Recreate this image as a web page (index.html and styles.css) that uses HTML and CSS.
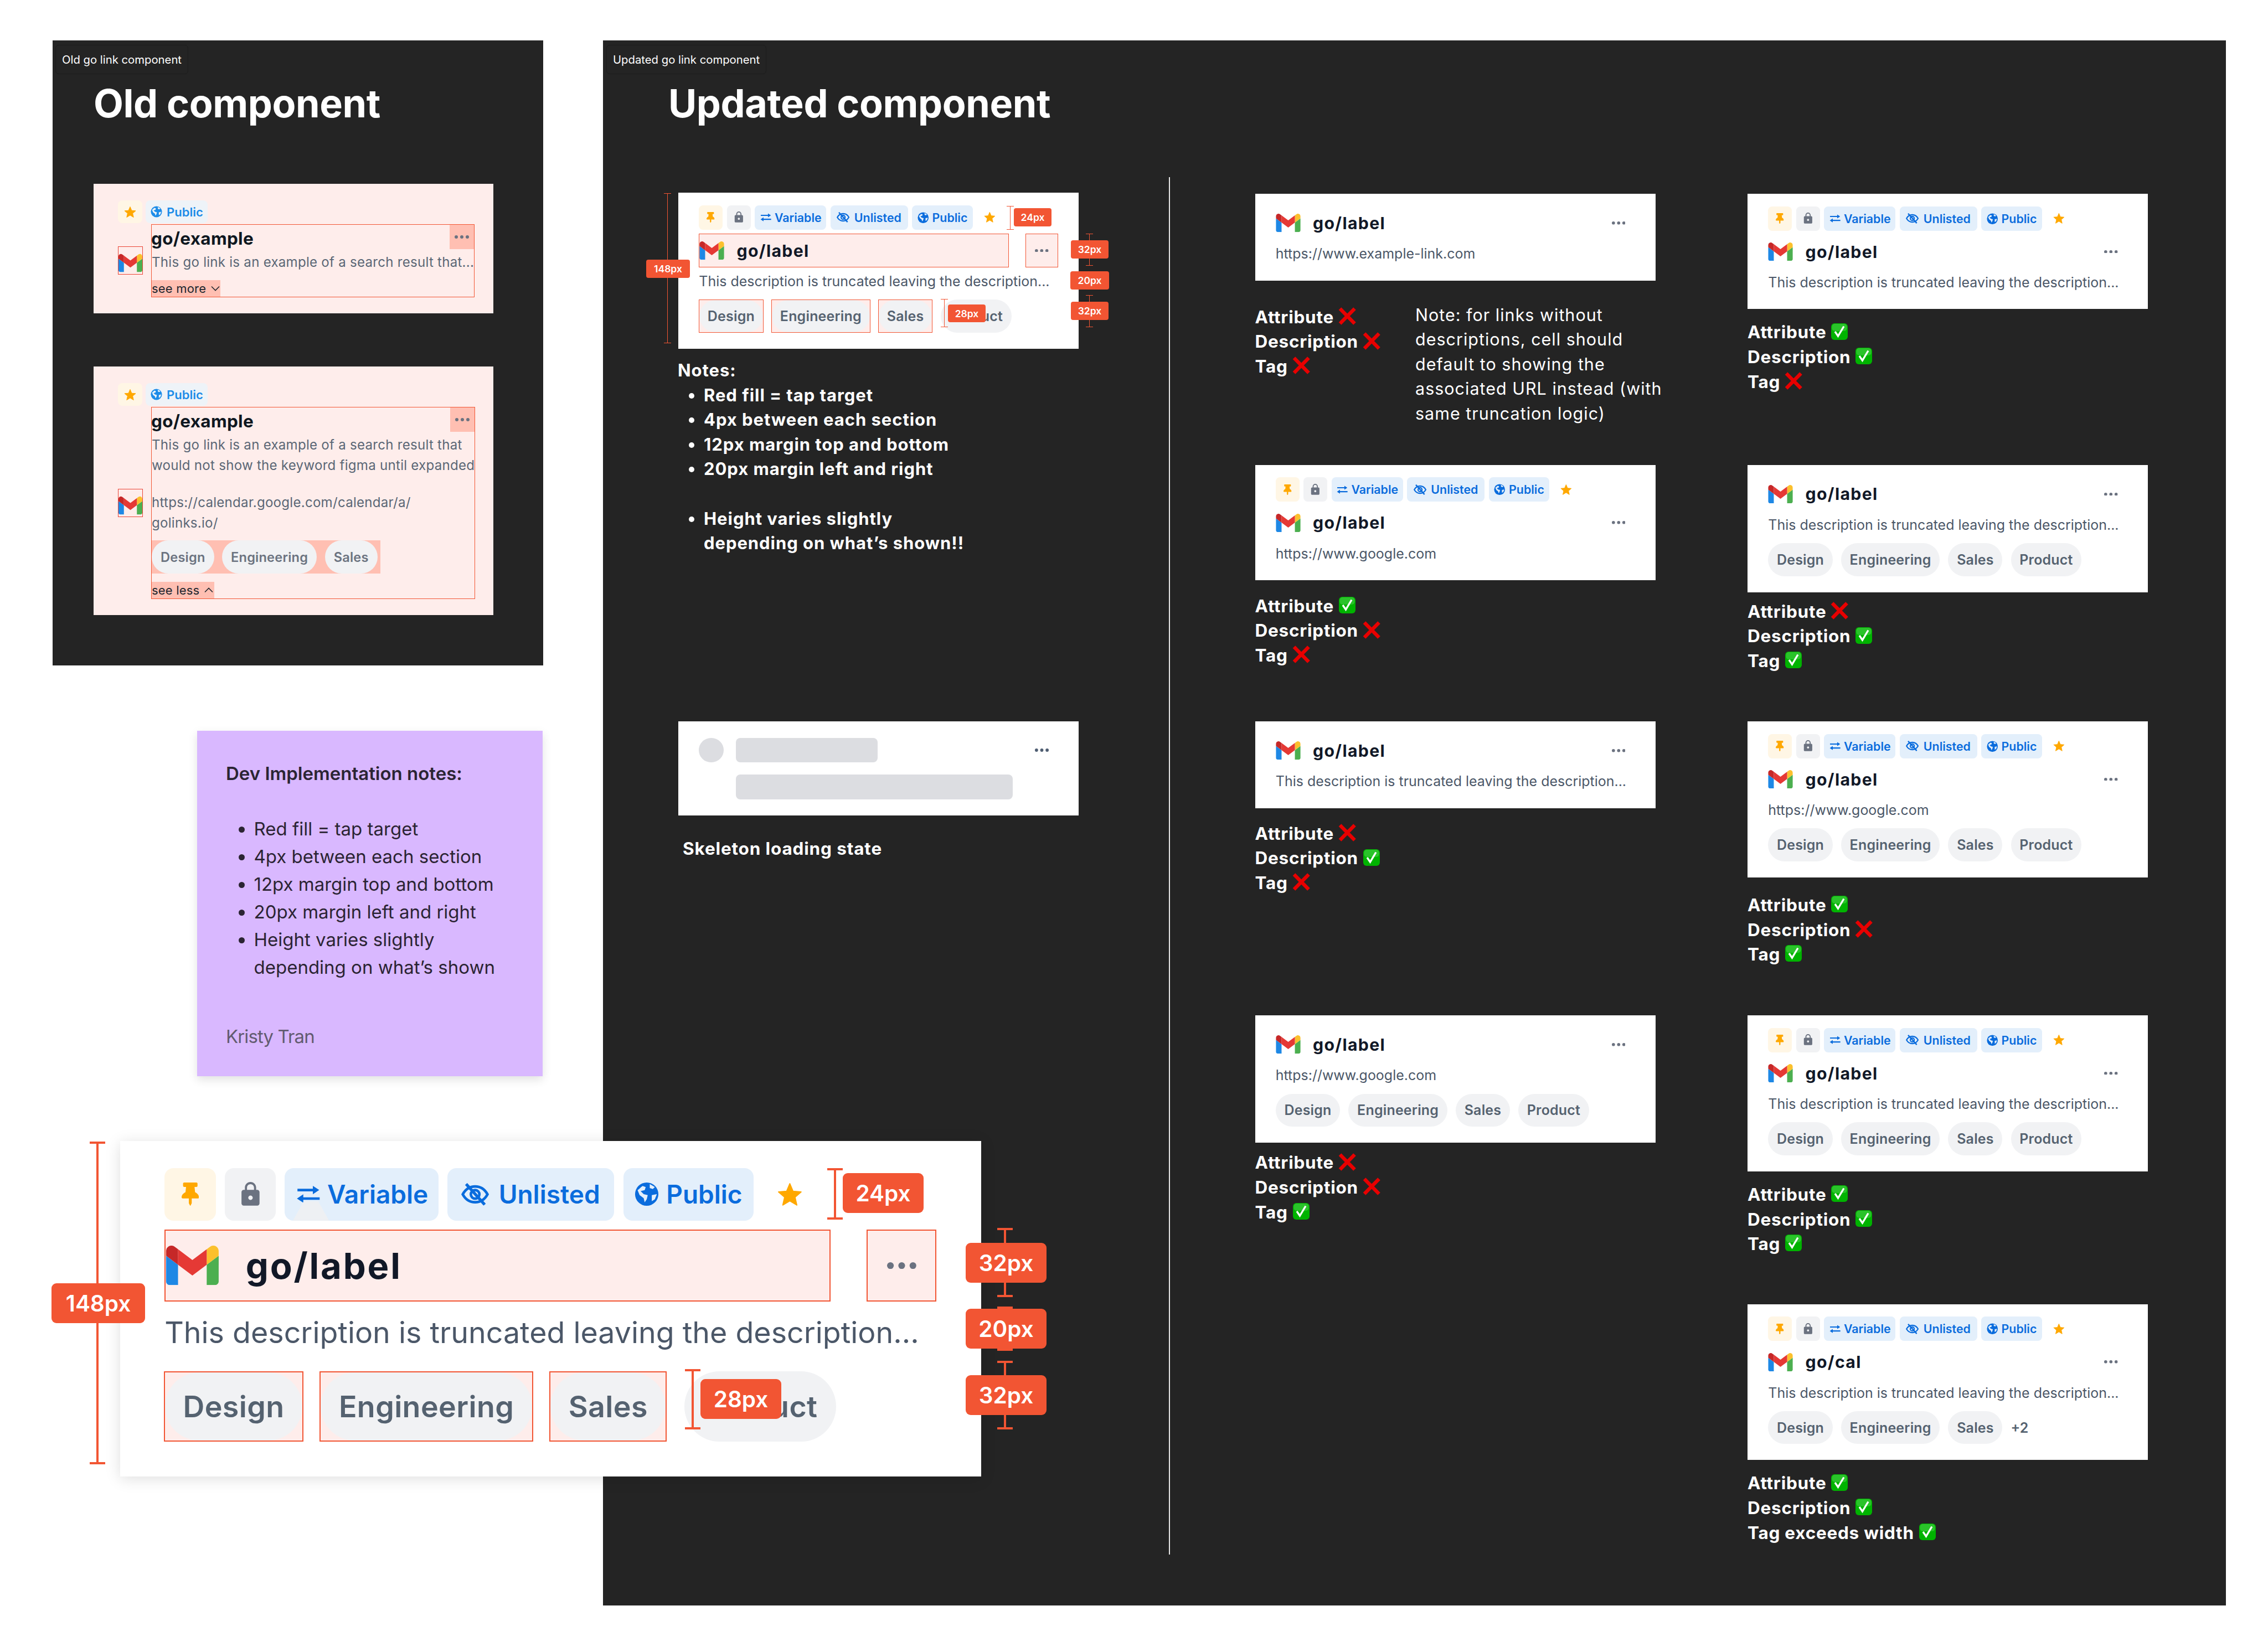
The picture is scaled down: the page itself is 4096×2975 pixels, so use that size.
FILE: index.html
```html
<!DOCTYPE html>
<html lang="en">
<head>
<meta charset="utf-8">
<title>Go link component</title>
<link rel="stylesheet" href="styles.css">
</head>
<body>
<svg class="defs" aria-hidden="true">
  <symbol id="pin" viewBox="0 0 384 512"><path d="M298 214L286 96h42c13 0 24-11 24-24V24c0-13-11-24-24-24H56C43 0 32 11 32 24v48c0 13 11 24 24 24h42L86 214C37 237 0 277 0 328c0 13 11 24 24 24h136v104c0 1 .3 2.500 .8 3.600l24 48c3 5.900 11.400 5.900 14.300 0l24-48c.6-1.100 .8-2.300 .8-3.600V352h136c13 0 24-11 24-24 0-51-38-91-86-114z"/></symbol>
  <symbol id="lock" viewBox="0 0 24 24"><path d="M18 8h-1V6c0-2.760-2.240-5-5-5S7 3.240 7 6v2H6c-1.100 0-2 .9-2 2v10c0 1.100 .9 2 2 2h12c1.100 0 2-.9 2-2V10c0-1.100-.9-2-2-2zm-6 9c-1.100 0-2-.9-2-2s.9-2 2-2 2 .9 2 2-.9 2-2 2zm3.100-9H8.900V6c0-1.710 1.390-3.100 3.100-3.100 1.710 0 3.100 1.390 3.100 3.100v2z"/></symbol>
  <symbol id="swap" viewBox="0 0 22 17"><path d="M1 4.500H18M22 12.500H4" fill="none" stroke="currentColor" stroke-width="2.400"/><path d="M15.500 .5L21.500 4.500L15.500 8.500zM6.500 8.500L.5 12.500L6.500 16.500z"/></symbol>
  <symbol id="eyeoff" viewBox="0 0 26 20"><g fill="none" stroke="currentColor" stroke-width="2.300"><path d="M2 10C5 4.500 9 3 13 3s8 1.500 11 7c-3 5.500-7 7-11 7s-8-1.500-11-7z"/><circle cx="13" cy="10" r="3.800"/><path d="M5 .8L21.500 19.200" stroke-width="2.600"/></g></symbol>
  <symbol id="globe" viewBox="0 0 24 24"><circle cx="12" cy="12" r="11.500"/><path class="land" d="M3 8c2-1 3-3 5-4l3 1-1 3-4 1 3 3 4 1-1 4-2 3-1-4-4-3zM15 2l5 3-2 2-3-1zM17 13l5-1-2 5-3 2z"/></symbol>
  <symbol id="star" viewBox="0 0 24 24"><path d="M12 17.800l6.200 3.700-1.600-7 5.400-4.700-7.200-.6L12 2.500 9.200 9.200 2 9.800l5.400 4.700-1.600 7z" stroke="currentColor" stroke-width="1" stroke-linejoin="round"/></symbol>
  <symbol id="dots" viewBox="0 0 13 3"><circle cx="1.500" cy="1.500" r="1.500"/><circle cx="6.500" cy="1.500" r="1.500"/><circle cx="11.500" cy="1.500" r="1.500"/></symbol>
  <symbol id="gmail" viewBox="52 42 88 66"><path fill="#1e88e5" d="M58 108h14V74L52 59v43c0 3.320 2.690 6 6 6"/><path fill="#4caf50" d="M120 108h14c3.320 0 6-2.690 6-6V59l-20 15"/><path fill="#fbc02d" d="M120 48v26l20-15v-8c0-7.420-8.470-11.650-14.400-7.200"/><path fill="#e53935" d="M72 74V48l24 18 24-18v26L96 92"/><path fill="#c62828" d="M52 51v8l20 15V48l-5.600-4.200c-5.940-4.450-14.400-.22-14.400 7.200"/></symbol>
  <symbol id="yes" viewBox="0 0 32 32"><rect x="1" y="1" width="30" height="30" rx="6" fill="#00b300"/><rect x="2.500" y="2" width="27" height="13" rx="5" fill="#4ccf4c" opacity=".55"/><path d="M8 16l5.500 8L24 6.500" fill="none" stroke="#fff" stroke-width="3.400"/></symbol>
  <symbol id="no" viewBox="0 0 32 32"><path d="M3 2.500L29.500 29.500M29.500 2.500L3 29.500" fill="none" stroke="#e80000" stroke-width="6.500"/></symbol>
  <symbol id="chev-down" viewBox="0 0 16 10"><path d="M1 1.500l7 7 7-7" fill="none" stroke="currentColor" stroke-width="1.600"/></symbol>
  <symbol id="chev-up" viewBox="0 0 16 10"><path d="M1 8.500l7-7 7 7" fill="none" stroke="currentColor" stroke-width="1.600"/></symbol>
</svg>

<main class="canvas">

  <section class="frame frame-old">
    <div class="frame-tag">Old go link component</div>
    <h1 class="frame-title">Old component</h1>
    <article class="old-card old-one">
      <div class="old-badges">
        <span class="old-badge old-star"><svg class="old-star-ic"><use href="#star"/></svg></span>
        <span class="old-badge old-public"><svg class="old-globe"><use href="#globe"/></svg>Public</span>
      </div>
      <div class="old-body">
        <svg class="old-logo"><use href="#gmail"/></svg>
        <div class="old-target">
          <span class="old-more"><svg class="dots"><use href="#dots"/></svg></span>
          <div class="old-title">go/example</div>
          <div class="old-desc">This go link is an example of a search result that...</div>
          <div class="old-toggle old-toggle-more">see more<svg class="chev"><use href="#chev-down"/></svg></div>
        </div>
      </div>
    </article>
    <article class="old-card old-two">
      <div class="old-badges">
        <span class="old-badge old-star"><svg class="old-star-ic"><use href="#star"/></svg></span>
        <span class="old-badge old-public"><svg class="old-globe"><use href="#globe"/></svg>Public</span>
      </div>
      <div class="old-body">
        <svg class="old-logo"><use href="#gmail"/></svg>
        <div class="old-target">
          <span class="old-more"><svg class="dots"><use href="#dots"/></svg></span>
          <div class="old-title">go/example</div>
          <div class="old-desc old-nowrap">This go link is an example of a search result that<br>would not show the keyword figma until expanded</div>
          <div class="old-desc old-url">https://calendar.google.com/calendar/a/<br>golinks.io/</div>
          <div class="old-tags"><span class="old-tag">Design</span><span class="old-tag">Engineering</span><span class="old-tag">Sales</span></div>
          <div class="old-toggle old-toggle-less">see less<svg class="chev"><use href="#chev-up"/></svg></div>
        </div>
      </div>
    </article>
  </section>

  <aside class="sticky">
    <p class="sticky-title">Dev Implementation notes:</p>
    <ul class="sticky-list">
      <li>Red fill = tap target</li>
      <li>4px between each section</li>
      <li>12px margin top and bottom</li>
      <li>20px margin left and right</li>
      <li>Height varies slightly<br>depending on what’s shown</li>
    </ul>
    <p class="sticky-author">Kristy Tran</p>
  </aside>

  <section class="frame frame-new">
    <div class="frame-tag">Updated go link component</div>
    <h1 class="frame-title">Updated component</h1>
  </section>

  <div class="node spec-small">
    <div class="card spec">
      <div class="attrs">
        <span class="badge b-pin"><svg class="i-pin"><use href="#pin"/></svg></span>
        <span class="badge b-lock"><svg class="i-lock"><use href="#lock"/></svg></span>
        <span class="badge b-blue b-varw"><svg class="i-swap"><use href="#swap"/></svg>Variable</span>
        <span class="badge b-blue b-unl"><svg class="i-eye"><use href="#eyeoff"/></svg>Unlisted</span>
        <span class="badge b-blue"><svg class="i-globe"><use href="#globe"/></svg>Public</span>
        <svg class="i-star"><use href="#star"/></svg>
      </div>
      <div class="head">
        <div class="link"><svg class="gmail"><use href="#gmail"/></svg><span class="label">go/label</span></div>
        <span class="more"><svg class="dots"><use href="#dots"/></svg></span>
      </div>
      <div class="desc">This description is truncated leaving the description...</div>
      <div class="tags">
        <span class="tag">Design</span><span class="tag">Engineering</span><span class="tag">Sales</span><span class="tag tag-plain">Product</span>
      </div>
    </div>
  </div>

  <i class="bracket br-s br-148"></i><b class="px px-s px-148">148px</b>
  <i class="bracket br-s br-24"></i><b class="px px-s px-24">24px</b>
  <i class="bracket br-s br-32a"></i><b class="px px-s px-32a">32px</b>
  <b class="px px-s px-20">20px</b>
  <i class="bracket br-s br-32b"></i><b class="px px-s px-32b">32px</b>
  <i class="bracket br-s br-28"></i><b class="px px-s px-28">28px</b>

  <div class="spec-notes">
    <p class="spec-notes-head">Notes:</p>
    <ul class="spec-notes-list">
      <li>Red fill = tap target</li>
      <li>4px between each section</li>
      <li>12px margin top and bottom</li>
      <li>20px margin left and right</li>
      <li class="gap">Height varies slightly<br>depending on what’s shown!!</li>
    </ul>
  </div>

  <div class="skeleton">
    <span class="sk-circle"></span>
    <span class="sk-bar sk-short"></span>
    <svg class="dots sk-dots"><use href="#dots"/></svg>
    <span class="sk-bar sk-long"></span>
  </div>
  <p class="sk-caption">Skeleton loading state</p>

  <div class="divider"></div>

  <!-- column 2 -->
  <div class="node c2-1">
    <div class="card">
      <div class="head"><div class="link"><svg class="gmail"><use href="#gmail"/></svg><span class="label">go/label</span></div><span class="more"><svg class="dots"><use href="#dots"/></svg></span></div>
      <div class="desc url">https://www.example-link.com</div>
    </div>
    <div class="status s-44">
      <div class="st">Attribute<svg class="mark"><use href="#no"/></svg></div>
      <div class="st">Description<svg class="mark"><use href="#no"/></svg></div>
      <div class="st">Tag<svg class="mark"><use href="#no"/></svg></div>
    </div>
  </div>
  <p class="note">Note: for links without<br>descriptions, cell should<br>default to showing the<br>associated URL instead (with<br>same truncation logic)</p>

  <div class="node c2-2">
    <div class="card">
      <div class="attrs">
        <span class="badge b-pin"><svg class="i-pin"><use href="#pin"/></svg></span>
        <span class="badge b-lock"><svg class="i-lock"><use href="#lock"/></svg></span>
        <span class="badge b-blue b-varw"><svg class="i-swap"><use href="#swap"/></svg>Variable</span>
        <span class="badge b-blue b-unl"><svg class="i-eye"><use href="#eyeoff"/></svg>Unlisted</span>
        <span class="badge b-blue"><svg class="i-globe"><use href="#globe"/></svg>Public</span>
        <svg class="i-star"><use href="#star"/></svg>
      </div>
      <div class="head"><div class="link"><svg class="gmail"><use href="#gmail"/></svg><span class="label">go/label</span></div><span class="more"><svg class="dots"><use href="#dots"/></svg></span></div>
      <div class="desc url">https://www.google.com</div>
    </div>
    <div class="status s-25">
      <div class="st">Attribute<svg class="mark"><use href="#yes"/></svg></div>
      <div class="st">Description<svg class="mark"><use href="#no"/></svg></div>
      <div class="st">Tag<svg class="mark"><use href="#no"/></svg></div>
    </div>
  </div>

  <div class="node c2-3">
    <div class="card">
      <div class="head"><div class="link"><svg class="gmail"><use href="#gmail"/></svg><span class="label">go/label</span></div><span class="more"><svg class="dots"><use href="#dots"/></svg></span></div>
      <div class="desc">This description is truncated leaving the description...</div>
    </div>
    <div class="status s-24">
      <div class="st">Attribute<svg class="mark"><use href="#no"/></svg></div>
      <div class="st">Description<svg class="mark"><use href="#yes"/></svg></div>
      <div class="st">Tag<svg class="mark"><use href="#no"/></svg></div>
    </div>
  </div>

  <div class="node c2-4">
    <div class="card">
      <div class="head"><div class="link"><svg class="gmail"><use href="#gmail"/></svg><span class="label">go/label</span></div><span class="more"><svg class="dots"><use href="#dots"/></svg></span></div>
      <div class="desc url">https://www.google.com</div>
      <div class="tags"><span class="tag">Design</span><span class="tag">Engineering</span><span class="tag">Sales</span><span class="tag">Product</span></div>
    </div>
    <div class="status s-14">
      <div class="st">Attribute<svg class="mark"><use href="#no"/></svg></div>
      <div class="st">Description<svg class="mark"><use href="#no"/></svg></div>
      <div class="st">Tag<svg class="mark"><use href="#yes"/></svg></div>
    </div>
  </div>

  <!-- column 3 -->
  <div class="node c3-1">
    <div class="card">
      <div class="attrs">
        <span class="badge b-pin"><svg class="i-pin"><use href="#pin"/></svg></span>
        <span class="badge b-lock"><svg class="i-lock"><use href="#lock"/></svg></span>
        <span class="badge b-blue b-varw"><svg class="i-swap"><use href="#swap"/></svg>Variable</span>
        <span class="badge b-blue b-unl"><svg class="i-eye"><use href="#eyeoff"/></svg>Unlisted</span>
        <span class="badge b-blue"><svg class="i-globe"><use href="#globe"/></svg>Public</span>
        <svg class="i-star"><use href="#star"/></svg>
      </div>
      <div class="head"><div class="link"><svg class="gmail"><use href="#gmail"/></svg><span class="label">go/label</span></div><span class="more"><svg class="dots"><use href="#dots"/></svg></span></div>
      <div class="desc">This description is truncated leaving the description...</div>
    </div>
    <div class="status s-20">
      <div class="st">Attribute<svg class="mark"><use href="#yes"/></svg></div>
      <div class="st">Description<svg class="mark"><use href="#yes"/></svg></div>
      <div class="st">Tag<svg class="mark"><use href="#no"/></svg></div>
    </div>
  </div>

  <div class="node c3-2">
    <div class="card">
      <div class="head"><div class="link"><svg class="gmail"><use href="#gmail"/></svg><span class="label">go/label</span></div><span class="more"><svg class="dots"><use href="#dots"/></svg></span></div>
      <div class="desc">This description is truncated leaving the description...</div>
      <div class="tags"><span class="tag">Design</span><span class="tag">Engineering</span><span class="tag">Sales</span><span class="tag">Product</span></div>
    </div>
    <div class="status s-13">
      <div class="st">Attribute<svg class="mark"><use href="#no"/></svg></div>
      <div class="st">Description<svg class="mark"><use href="#yes"/></svg></div>
      <div class="st">Tag<svg class="mark"><use href="#yes"/></svg></div>
    </div>
  </div>

  <div class="node c3-3">
    <div class="card">
      <div class="attrs">
        <span class="badge b-pin"><svg class="i-pin"><use href="#pin"/></svg></span>
        <span class="badge b-lock"><svg class="i-lock"><use href="#lock"/></svg></span>
        <span class="badge b-blue b-varw"><svg class="i-swap"><use href="#swap"/></svg>Variable</span>
        <span class="badge b-blue b-unl"><svg class="i-eye"><use href="#eyeoff"/></svg>Unlisted</span>
        <span class="badge b-blue"><svg class="i-globe"><use href="#globe"/></svg>Public</span>
        <svg class="i-star"><use href="#star"/></svg>
      </div>
      <div class="head"><div class="link"><svg class="gmail"><use href="#gmail"/></svg><span class="label">go/label</span></div><span class="more"><svg class="dots"><use href="#dots"/></svg></span></div>
      <div class="desc url">https://www.google.com</div>
      <div class="tags"><span class="tag">Design</span><span class="tag">Engineering</span><span class="tag">Sales</span><span class="tag">Product</span></div>
    </div>
    <div class="status s-28">
      <div class="st">Attribute<svg class="mark"><use href="#yes"/></svg></div>
      <div class="st">Description<svg class="mark"><use href="#no"/></svg></div>
      <div class="st">Tag<svg class="mark"><use href="#yes"/></svg></div>
    </div>
  </div>

  <div class="node c3-4">
    <div class="card">
      <div class="attrs">
        <span class="badge b-pin"><svg class="i-pin"><use href="#pin"/></svg></span>
        <span class="badge b-lock"><svg class="i-lock"><use href="#lock"/></svg></span>
        <span class="badge b-blue b-varw"><svg class="i-swap"><use href="#swap"/></svg>Variable</span>
        <span class="badge b-blue b-unl"><svg class="i-eye"><use href="#eyeoff"/></svg>Unlisted</span>
        <span class="badge b-blue"><svg class="i-globe"><use href="#globe"/></svg>Public</span>
        <svg class="i-star"><use href="#star"/></svg>
      </div>
      <div class="head"><div class="link"><svg class="gmail"><use href="#gmail"/></svg><span class="label">go/label</span></div><span class="more"><svg class="dots"><use href="#dots"/></svg></span></div>
      <div class="desc">This description is truncated leaving the description...</div>
      <div class="tags"><span class="tag">Design</span><span class="tag">Engineering</span><span class="tag">Sales</span><span class="tag">Product</span></div>
    </div>
    <div class="status s-20">
      <div class="st">Attribute<svg class="mark"><use href="#yes"/></svg></div>
      <div class="st">Description<svg class="mark"><use href="#yes"/></svg></div>
      <div class="st">Tag<svg class="mark"><use href="#yes"/></svg></div>
    </div>
  </div>

  <div class="node c3-5">
    <div class="card">
      <div class="attrs">
        <span class="badge b-pin"><svg class="i-pin"><use href="#pin"/></svg></span>
        <span class="badge b-lock"><svg class="i-lock"><use href="#lock"/></svg></span>
        <span class="badge b-blue b-varw"><svg class="i-swap"><use href="#swap"/></svg>Variable</span>
        <span class="badge b-blue b-unl"><svg class="i-eye"><use href="#eyeoff"/></svg>Unlisted</span>
        <span class="badge b-blue"><svg class="i-globe"><use href="#globe"/></svg>Public</span>
        <svg class="i-star"><use href="#star"/></svg>
      </div>
      <div class="head"><div class="link"><svg class="gmail"><use href="#gmail"/></svg><span class="label">go/cal</span></div><span class="more"><svg class="dots"><use href="#dots"/></svg></span></div>
      <div class="desc">This description is truncated leaving the description...</div>
      <div class="tags"><span class="tag">Design</span><span class="tag">Engineering</span><span class="tag">Sales</span><span class="overflow">+2</span></div>
    </div>
    <div class="status s-20">
      <div class="st">Attribute<svg class="mark"><use href="#yes"/></svg></div>
      <div class="st">Description<svg class="mark"><use href="#yes"/></svg></div>
      <div class="st">Tag exceeds width<svg class="mark"><use href="#yes"/></svg></div>
    </div>
  </div>

  <!-- enlarged spec -->
  <div class="node spec-big">
    <div class="card spec big">
      <div class="attrs">
        <span class="badge b-pin"><svg class="i-pin"><use href="#pin"/></svg></span>
        <span class="badge b-lock"><svg class="i-lock"><use href="#lock"/></svg></span>
        <span class="badge b-blue b-varw b-var"><svg class="i-swap"><use href="#swap"/></svg>Variable</span>
        <span class="badge b-blue b-unl"><svg class="i-eye"><use href="#eyeoff"/></svg>Unlisted</span>
        <span class="badge b-blue"><svg class="i-globe"><use href="#globe"/></svg>Public</span>
        <svg class="i-star"><use href="#star"/></svg>
      </div>
      <div class="head">
        <div class="link"><svg class="gmail"><use href="#gmail"/></svg><span class="label">go/label</span></div>
        <span class="more"><svg class="dots"><use href="#dots"/></svg></span>
      </div>
      <div class="desc">This description is truncated leaving the description...</div>
      <div class="tags">
        <span class="tag">Design</span><span class="tag">Engineering</span><span class="tag">Sales</span><span class="tag tag-plain">Product</span>
      </div>
    </div>
  </div>
  <i class="bracket br-l brl-148"></i><b class="px px-l pxl-148">148px</b>
  <i class="bracket br-l brl-24"></i><b class="px px-l pxl-24">24px</b>
  <i class="bracket br-l brl-32a"></i><b class="px px-l pxl-32a">32px</b>
  <i class="bracket br-l brl-20"></i><b class="px px-l pxl-20">20px</b>
  <i class="bracket br-l brl-32b"></i><b class="px px-l pxl-32b">32px</b>
  <i class="bracket br-l brl-28"></i><b class="px px-l pxl-28">28px</b>
</main>
</body>
</html>
```

FILE: styles.css
```css
* { box-sizing: border-box; }
html, body { margin: 0; background: #fff; }
body { font-family: Inter, "Liberation Sans", sans-serif; }
p { margin: 0; }
svg { display: block; flex: none; fill: currentColor; }
.defs { position: absolute; width: 0; height: 0; overflow: hidden; }

.canvas { position: relative; width: 4096px; height: 2975px; background: #fff; overflow: hidden; }

/* Frames on the free canvas */
.frame { position: absolute; background: #242424; color: #fff; }
.frame-old { left: 95px; top: 73px; width: 886px; height: 1129px; }
.frame-new { left: 1089px; top: 73px; width: 2931px; height: 2827px; }
.frame-tag { position: absolute; left: 5px; top: 8px; height: 53px; padding: 0 11px; display: flex; align-items: center;
  border: 1px solid #1c1c1c; border-radius: 6px; font-size: 20.300px; white-space: nowrap; }
.frame-new .frame-tag { left: 6px; }
.frame-title { position: absolute; margin: 0; top: 74px; left: 74px; font-size: 70px; line-height: 80px; font-weight: 700; white-space: nowrap; letter-spacing: -.4px; }
.frame-new .frame-title { left: 118px; }

/* Old cards */
.old-card { position: absolute; left: 74px; width: 722px; background: #feedeb; padding: 30px 37px 29px 44px; color: #0f1720; }
.old-one { top: 259px; }
.old-two { top: 589px; }
.old-badges { display: flex; gap: 6px; height: 41px; margin-bottom: 1.500px; }
.old-badge { display: flex; align-items: center; height: 41px; border-radius: 8px; font-size: 22px; font-weight: 600; }
.old-star { width: 44px; justify-content: center; background: #fff6e5; color: #ffa800; }
.old-star-ic { width: 24px; height: 24px; }
.old-public { width: 112px; padding-left: 9px; gap: 8px; background: #eef3f8; color: #1d8ce8; }
.old-globe { width: 21px; height: 21px; --land: #eef3f8; }
.old-body { display: flex; align-items: center; gap: 15px; }
.old-logo { width: 45px; height: 51px; border: 1px solid #ea4335; padding: 9px 0 0; }
.old-target { position: relative; flex: 1; border: 1px solid #f25533; }
.old-more { position: absolute; right: 0; top: 0; width: 44px; height: 44px; background: #ffbfb2; display: flex; align-items: center; justify-content: center; color: #6b7280; }
.old-more .dots { width: 26px; height: 6px; }
.old-title { font-size: 31.500px; line-height: 49px; font-weight: 700; letter-spacing: .3px; margin-left: -1px; }
.old-desc { font-size: 24.100px; line-height: 37px; color: #5b6776; letter-spacing: .25px; white-space: nowrap; }
.old-url { margin-top: 30px; }
.old-toggle { display: flex; align-items: center; height: 30px; font-size: 22px; color: #20262e; letter-spacing: .2px; background: #ffbfb2; white-space: nowrap; }
.old-toggle-more { width: 124px; margin-top: 14px; gap: 9px; }
.old-toggle-less { width: 113px; margin-top: 14.500px; gap: 9px; }
.chev { width: 16px; height: 10px; }
.old-tags { display: flex; gap: 14.500px; width: 413px; height: 60px; margin-top: 13.500px; background: #ffbfb2; }
.old-tag { display: flex; align-items: center; height: 60px; padding: 0 16px; border-radius: 30px; background: #f1f2f4; color: #6b7380; font-size: 23.600px; font-weight: 600; letter-spacing: .2px; }

/* Sticky */
.sticky { position: absolute; left: 356px; top: 1320px; width: 624px; height: 624px; background: #d9b8ff; padding: 52px 52px; color: #2b2433;
  font-size: 33px; line-height: 50px; box-shadow: 0 6px 16px rgba(0,0,0,.12); }
.sticky-title { font-weight: 600; }
.sticky-list { margin: 50px 0 0; padding: 0 0 0 50.500px; }
.sticky-author { margin-top: 75px; color: #625b70; letter-spacing: -.9px; }

/* Anchor nodes on the free canvas */
.node { position: absolute; }
.spec-small { left: 1225px; top: 348px; }
.c2-1 { left: 2266.500px; top: 350px; }
.c2-2 { left: 2266.500px; top: 839.500px; }
.c2-3 { left: 2266.500px; top: 1303px; }
.c2-4 { left: 2266.500px; top: 1834px; }
.c3-1 { left: 3156px; top: 350px; }
.c3-2 { left: 3156px; top: 839.500px; }
.c3-3 { left: 3156px; top: 1303px; }
.c3-4 { left: 3156px; top: 1834px; }
.c3-5 { left: 3156px; top: 2355.500px; }
.spec-big { left: 217px; top: 2061px; box-shadow: 0 4px 26px rgba(0,0,0,.13); }

/* Go link card, drawn in design pixels and scaled */
.card { zoom: 1.893; width: 382px; background: #fff; padding: 12px 19.800px 14.100px 19.700px; color: #111827; }
.big { zoom: 4.07; }
.attrs { display: flex; align-items: center; gap: 4px; height: 23.300px; margin-bottom: 4px; }
.badge { display: flex; align-items: center; justify-content: center; height: 23.300px; border-radius: 4px; padding: 0 5px; font-size: 11.300px; font-weight: 600; white-space: nowrap; }
.b-pin { width: 22.700px; padding: 0; background: #fff6e5; color: #ffa800; }
.b-lock { width: 22.700px; padding: 0; background: #f1f2f4; color: #6b7280; }
.b-blue { gap: 3.300px; background: #e3effb; color: #0a6cdd; --land: #e3effb; }
.b-varw { padding-right: 4.500px; }
.b-unl { padding-right: 6.300px; }
.i-pin { width: 7.700px; height: 10.300px; }
.i-lock { width: 12px; height: 12px; }
.i-swap { width: 10.500px; height: 8px; }
.i-eye { width: 13.300px; height: 10px; margin: 0 .6px; }
.i-globe { width: 10.800px; height: 10.800px; }
.land { fill: var(--land, #fff); }
.i-star { width: 12px; height: 12px; margin-left: 6.100px; color: #ffa800; }
.head { display: flex; align-items: center; gap: 16px; height: 32px; }
.link { flex: 1; display: flex; align-items: center; gap: 11.700px; height: 32px; }
.gmail { width: 23.800px; height: 17.500px; }
.label { font-size: 16px; font-weight: 700; letter-spacing: .7px; white-space: nowrap; }
.more { display: flex; align-items: center; justify-content: center; width: 31px; height: 32px; color: #6b7280; }
.dots { width: 13px; height: 3px; }
.desc { margin-top: 2.700px; font-size: 13.200px; line-height: 22px; color: #4b5768; white-space: nowrap; }
.tags { display: flex; align-items: center; gap: 8px; margin: 6.200px 0 1.400px; }
.tag { display: flex; align-items: center; height: 31.300px; padding: 0 8.300px; border-radius: 16px; background: #f1f2f4; color: #556270; font-size: 13.200px; font-weight: 600; letter-spacing: .1px; white-space: nowrap; }
.overflow { color: #556270; font-size: 13.200px; font-weight: 600; }

/* Tap target highlight */
.spec .link, .spec .more { background: #feedeb; border: 1px solid #f25533; }
.spec .link { border-width: .6px; }
.spec .more { border-width: .6px; }
.spec .tags { gap: 7.200px; margin-left: -.3px; }
.spec .tag { position: relative; isolation: isolate; background: #feedeb; border: .6px solid #f25533; border-radius: 0; padding: 0 8px; }
.spec .tag::before { content: ""; position: absolute; inset: 0; z-index: -1; background: #f1f2f4; border-radius: 16px; }
.spec .tag-plain { background: #f1f2f4; border: 0; border-radius: 16px; margin-left: .5px; padding: 0 8.300px; }
.spec .tag-plain::before { display: none; }
.b-var { position: relative; }
.b-var::after { content: ""; position: absolute; left: 3.600px; bottom: 0; width: 16px; height: 8.600px; background: #eef0f3; clip-path: polygon(30% 0, 70% 0, 100% 100%, 0 100%); }

/* Measurements */
.bracket { position: absolute; display: block; border-style: solid; border-color: #f25533; border-width: 1.500px 0; }
.bracket::before { content: ""; position: absolute; top: 0; bottom: 0; left: 50%; margin-left: -.75px; width: 1.500px; background: #f25533; }
.br-l { border-width: 4px 0; }
.br-l::before { margin-left: -2px; width: 4px; }
.px { position: absolute; display: flex; align-items: center; justify-content: center; background: #f25533; color: #fff; font-weight: 600; white-space: nowrap; }
.px-s { font-size: 17.500px; border-radius: 4px; height: 33px; width: 68px; }
.px-l { font-size: 40.500px; border-radius: 9px; height: 72px; width: 146px; }

.br-148 { left: 1199px; top: 349px; width: 13px; height: 271px; }
.px-148 { left: 1167px; top: 469px; width: 79px; }
.br-24 { left: 1818px; top: 372px; width: 13px; height: 43px; }
.px-24 { left: 1831px; top: 376px; }
.br-32a { left: 1961px; top: 421.500px; width: 13px; height: 58px; }
.px-32a { left: 1934px; top: 434px; }
.px-20 { left: 1933px; top: 490px; width: 70px; }
.br-32b { left: 1961px; top: 533px; width: 13px; height: 58px; }
.px-32b { left: 1934px; top: 545px; }
.br-28 { left: 1699px; top: 540px; width: 13px; height: 51px; }
.px-28 { left: 1712px; top: 550px; height: 32px; }

.brl-148 { left: 162px; top: 2062px; width: 28px; height: 583px; }
.pxl-148 { left: 93px; top: 2318px; width: 169px; }
.brl-24 { left: 1494px; top: 2110px; width: 28px; height: 93px; }
.pxl-24 { left: 1522px; top: 2119px; }
.brl-32a { left: 1801px; top: 2218px; width: 28px; height: 125px; }
.pxl-32a { left: 1744px; top: 2245px; }
.brl-20 { left: 1801px; top: 2360px; width: 28px; height: 80px; }
.pxl-20 { left: 1744px; top: 2364px; }
.brl-32b { left: 1801px; top: 2458px; width: 28px; height: 124px; }
.pxl-32b { left: 1744px; top: 2484px; }
.brl-28 { left: 1237px; top: 2473px; width: 28px; height: 109px; }
.pxl-28 { left: 1265px; top: 2491px; }

/* Spec notes */
.spec-notes { position: absolute; left: 1224px; top: 647px; color: #fff; font-size: 31px; line-height: 44.600px; font-weight: 700; letter-spacing: .95px; white-space: nowrap; }
.spec-notes-list { margin: 0; padding: 0 0 0 47px; }
.gap { margin-top: 44.600px; }

/* Skeleton */
.skeleton { position: absolute; left: 1225px; top: 1303px; width: 723px; height: 170px; padding: 29.500px 37px; background: #fff;
  display: grid; grid-template-columns: 44.500px 255.500px 1fr; grid-template-rows: 44.500px 44.500px; column-gap: 22.500px; row-gap: 22px; align-items: center; }
.sk-circle { width: 44.500px; height: 44.500px; border-radius: 50%; background: #dcdde1; }
.sk-bar { height: 44.500px; border-radius: 8px; background: #dcdde1; }
.sk-short { width: 255.500px; }
.sk-long { grid-column: 2 / 4; grid-row: 2; width: 500px; }
.sk-dots { width: 25px; height: 6px; justify-self: end; margin-right: 17.500px; color: #4f5e72; }
.sk-caption { position: absolute; left: 1233px; top: 1511px; color: #fff; font-size: 31.500px; line-height: 44px; font-weight: 700; letter-spacing: .85px; white-space: nowrap; }

.divider { position: absolute; left: 2110.500px; top: 320px; width: 2px; height: 2488px; background: #e8e8e8; }

/* Status lists */
.status { color: #fff; font-size: 31.500px; line-height: 44.600px; font-weight: 700; letter-spacing: .75px; white-space: nowrap; }
.st { display: flex; align-items: center; gap: 8px; height: 44.600px; }
.mark { width: 32px; height: 32px; margin-top: -4px; }
.s-44 { margin-top: 44px; }
.s-25 { margin-top: 25px; }
.s-24 { margin-top: 24px; }
.s-14 { margin-top: 14px; }
.s-20 { margin-top: 20px; }
.s-13 { margin-top: 13px; }
.s-28 { margin-top: 28px; }

.note { position: absolute; left: 2556px; top: 546.500px; color: #fff; font-size: 30.500px; line-height: 44.600px; letter-spacing: 1px; white-space: nowrap; }
```
